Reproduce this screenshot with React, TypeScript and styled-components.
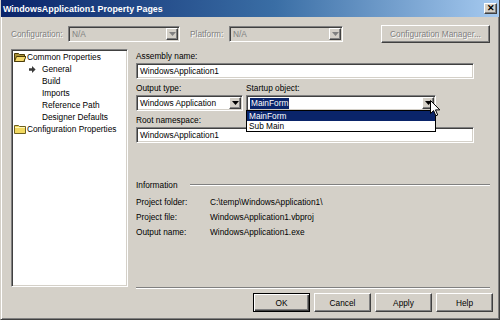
import { Fragment } from 'react';
import styled, { createGlobalStyle } from 'styled-components';

const GlobalStyle = createGlobalStyle`
  html, body { margin: 0; padding: 0; background: #d4d0c8; }
  body {
    font-family: Tahoma, "Liberation Sans", Arial, sans-serif;
    font-size: 8.3px;
    color: #000;
  }
  * { box-sizing: border-box; }
`;

// classic 3D borders
const raised = `
  border: 1px solid;
  border-color: #fff #404040 #404040 #fff;
  box-shadow: inset -1px -1px #808080, inset 1px 1px #d4d0c8;
  background: #d4d0c8;
`;

const sunken = `
  border: 1px solid;
  border-color: #808080 #fff #fff #808080;
  box-shadow: inset 1px 1px #404040, inset -1px -1px #d4d0c8;
`;

const DownArrow = ({ color = '#000' }: { color?: string }) => (
  <svg width="7" height="4" viewBox="0 0 7 4">
    <path d="M0 0h7L3.5 4z" fill={color} />
  </svg>
);

const OpenFolder = () => (
  <svg width="12" height="10" viewBox="0 0 12 10">
    <path d="M0.5 1.5h4l1 1h5v7h-10z" fill="#a89038" stroke="#4a3c08" />
    <path d="M0.5 9.5l2-5h9.5l-2.2 5z" fill="#f4d86a" stroke="#4a3c08" />
  </svg>
);

const ClosedFolder = () => (
  <svg width="12" height="10" viewBox="0 0 12 10">
    <path d="M0.5 1.5h4l1 1h6v7h-11z" fill="#f2d960" stroke="#6e6020" />
    <path d="M1 3.5h10" stroke="#fff7b8" />
  </svg>
);

const CurrentArrow = () => (
  <svg width="7" height="7" viewBox="0 0 7 7">
    <path d="M0 2.3h3V0l3.6 3.5L3 7V4.7H0z" fill="#3a3a3a" />
  </svg>
);

const PointerCursor = () => (
  <svg width="11" height="17" viewBox="0 0 11 17">
    <path
      d="M0.5 0.5V13.5L3.6 10.6 5.8 15.8 7.7 15 5.5 9.9H9.8Z"
      fill="#fff"
      stroke="#000"
      strokeLinejoin="round"
    />
  </svg>
);

const Window = styled.div`
  width: 500px;
  height: 320px;
  display: flex;
  flex-direction: column;
  background: #d4d0c8;
  border: 1px solid;
  border-top: none;
  border-color: #d4d0c8 #404040 #404040 #d4d0c8;
  box-shadow: inset 1px 0 #fff, inset -1px -1px #808080;
`;

const TitleBar = styled.div`
  height: 17px;
  display: flex;
  align-items: center;
  padding: 0 2px 0 2px;
  background: linear-gradient(to right, #0a246a, #3a6ea5 55%, #a6caf0);
`;

const Title = styled.div`
  flex: 1;
  color: #fff;
  font-weight: bold;
  font-size: 8.9px;
`;

const CloseButton = styled.div`
  ${raised}
  width: 13px;
  height: 11px;
  display: flex;
  align-items: center;
  justify-content: center;
  font: bold 9px "Liberation Sans", Arial, sans-serif;
  line-height: 1;
`;

const Body = styled.div`
  flex: 1;
  display: flex;
  flex-direction: column;
  padding: 8px 9px 0 10px;
`;

const TopRow = styled.div`
  height: 18px;
  display: flex;
  align-items: center;
`;

const RowLabel = styled.div<{ $width: number; $gap?: number }>`
  width: ${(p) => p.$width}px;
  margin-left: ${(p) => p.$gap ?? 0}px;
  color: #808080;
  text-shadow: 1px 1px 0 #fff;
  white-space: nowrap;
`;

const Combo = styled.div<{ $width: number; $disabled?: boolean }>`
  ${sunken}
  position: relative;
  width: ${(p) => p.$width}px;
  height: 16px;
  padding: 1px;
  display: flex;
  align-items: center;
  background: ${(p) => (p.$disabled ? '#d4d0c8' : '#fff')};
  color: ${(p) => (p.$disabled ? '#808080' : '#000')};
`;

const ComboText = styled.div`
  flex: 1;
  padding-left: 2px;
  line-height: 12px;
  white-space: nowrap;
`;

const ComboArrow = styled.div`
  ${raised}
  width: 12px;
  height: 12px;
  display: flex;
  align-items: center;
  justify-content: center;
`;

const ToolButton = styled.div`
  ${raised}
  margin-left: auto;
  width: 109px;
  height: 18px;
  display: flex;
  align-items: center;
  justify-content: center;
  color: #808080;
  text-shadow: 1px 1px 0 #fff;
`;

const Main = styled.div`
  margin-top: 6px;
  height: 240px;
  display: flex;
  gap: 8px;
`;

const TreePanel = styled.div`
  ${sunken}
  width: 117px;
  height: 238px;
  background: #fff;
  padding: 1px 0 0 2px;
`;

const TreeRow = styled.div<{ $level: number }>`
  height: 12px;
  display: flex;
  align-items: center;
  padding-left: ${(p) => p.$level * 15}px;
  white-space: nowrap;
`;

const TreeIcon = styled.span`
  width: 13px;
  display: flex;
  align-items: center;
`;

const RightColumn = styled.div`
  flex: 1;
  display: flex;
  flex-direction: column;
`;

const FieldLabel = styled.div<{ $top?: number }>`
  margin-top: ${(p) => p.$top ?? 0}px;
  height: 11px;
  line-height: 11px;
  margin-bottom: 1px;
  white-space: nowrap;
`;

const TextBox = styled.div`
  ${sunken}
  width: 338px;
  height: 16px;
  background: #fff;
  padding: 0 3px;
  line-height: 14px;
`;

const ComboGrid = styled.div`
  margin-top: 4px;
  display: grid;
  grid-template-columns: 107px 190px;
  column-gap: 3px;
  row-gap: 1px;
  & > ${FieldLabel} { margin: 0; }
`;

const Selected = styled.span`
  background: #0a246a;
  color: #fff;
  padding: 0 1px;
  line-height: 11px;
  display: inline-block;
`;

const DropList = styled.div`
  position: absolute;
  top: 100%;
  left: -1px;
  right: -1px;
  border: 1px solid #000;
  background: #fff;
  z-index: 2;
`;

const DropItem = styled.div<{ $selected?: boolean }>`
  height: 10px;
  line-height: 10px;
  padding-left: 2px;
  background: ${(p) => (p.$selected ? '#0a246a' : '#fff')};
  color: ${(p) => (p.$selected ? '#fff' : '#000')};
`;

const Pointer = styled.div`
  position: absolute;
  left: 183px;
  top: 4px;
  z-index: 3;
  line-height: 0;
`;

const InfoHeader = styled.div`
  margin-top: 36px;
  height: 11px;
  display: flex;
  align-items: center;
  gap: 12px;
`;

const EtchedLine = styled.div`
  flex: 1;
  height: 2px;
  border-top: 1px solid #808080;
  border-bottom: 1px solid #fff;
`;

const InfoGrid = styled.div`
  margin-top: 7px;
  display: grid;
  grid-template-columns: 74px 1fr;
  grid-auto-rows: 11px;
  row-gap: 4px;
  line-height: 11px;
  white-space: nowrap;
`;

const Separator = styled.div`
  margin-top: auto;
  height: 2px;
  border-top: 1px solid #808080;
  border-bottom: 1px solid #fff;
`;

const ButtonRow = styled.div`
  margin-top: 4px;
  margin-right: -3px;
  display: flex;
  justify-content: flex-end;
  gap: 4px;
`;

const DialogButton = styled.div<{ $default?: boolean }>`
  width: 57px;
  height: 19px;
  display: flex;
  align-items: center;
  justify-content: center;
  background: #d4d0c8;
  border: 1px solid;
  border-color: ${(p) => (p.$default ? '#000' : '#fff #404040 #404040 #fff')};
  box-shadow: ${(p) =>
    p.$default
      ? 'inset 1px 1px #fff, inset -1px -1px #404040, inset -2px -2px #808080'
      : 'inset -1px -1px #808080, inset 1px 1px #d4d0c8'};
`;

const treeItems = [
  { label: 'Common Properties', level: 0, icon: <OpenFolder /> },
  { label: 'General', level: 1, icon: <CurrentArrow /> },
  { label: 'Build', level: 1 },
  { label: 'Imports', level: 1 },
  { label: 'Reference Path', level: 1 },
  { label: 'Designer Defaults', level: 1 },
  { label: 'Configuration Properties', level: 0, icon: <ClosedFolder /> },
];

const info = [
  ['Project folder:', 'C:\\temp\\WindowsApplication1\\'],
  ['Project file:', 'WindowsApplication1.vbproj'],
  ['Output name:', 'WindowsApplication1.exe'],
];

export default function App() {
  return (
    <>
      <GlobalStyle />
      <Window>
        <TitleBar>
          <Title>WindowsApplication1 Property Pages</Title>
          <CloseButton>✕</CloseButton>
        </TitleBar>
        <Body>
          <TopRow>
            <RowLabel $width={57}>Configuration:</RowLabel>
            <Combo $width={112} $disabled>
              <ComboText>N/A</ComboText>
              <ComboArrow>
                <DownArrow color="#808080" />
              </ComboArrow>
            </Combo>
            <RowLabel $width={39} $gap={10}>Platform:</RowLabel>
            <Combo $width={114} $disabled>
              <ComboText>N/A</ComboText>
              <ComboArrow>
                <DownArrow color="#808080" />
              </ComboArrow>
            </Combo>
            <ToolButton>Configuration Manager...</ToolButton>
          </TopRow>

          <Main>
            <TreePanel>
              {treeItems.map((item) => (
                <TreeRow key={item.label} $level={item.level}>
                  <TreeIcon>{item.icon}</TreeIcon>
                  {item.label}
                </TreeRow>
              ))}
            </TreePanel>

            <RightColumn>
              <FieldLabel $top={2}>Assembly name:</FieldLabel>
              <TextBox>WindowsApplication1</TextBox>

              <ComboGrid>
                <FieldLabel>Output type:</FieldLabel>
                <FieldLabel>Startup object:</FieldLabel>
                <Combo $width={107}>
                  <ComboText>Windows Application</ComboText>
                  <ComboArrow>
                    <DownArrow />
                  </ComboArrow>
                </Combo>
                <Combo $width={190}>
                  <ComboText>
                    <Selected>MainForm</Selected>
                  </ComboText>
                  <ComboArrow>
                    <DownArrow />
                  </ComboArrow>
                  <DropList>
                    <DropItem $selected>MainForm</DropItem>
                    <DropItem>Sub Main</DropItem>
                  </DropList>
                  <Pointer>
                    <PointerCursor />
                  </Pointer>
                </Combo>
              </ComboGrid>

              <FieldLabel $top={4}>Root namespace:</FieldLabel>
              <TextBox>WindowsApplication1</TextBox>

              <InfoHeader>
                Information
                <EtchedLine />
              </InfoHeader>
              <InfoGrid>
                {info.map(([k, v]) => (
                  <Fragment key={k}>
                    <span>{k}</span>
                    <span>{v}</span>
                  </Fragment>
                ))}
              </InfoGrid>

              <Separator />
            </RightColumn>
          </Main>

          <ButtonRow>
            <DialogButton $default>OK</DialogButton>
            <DialogButton>Cancel</DialogButton>
            <DialogButton>Apply</DialogButton>
            <DialogButton>Help</DialogButton>
          </ButtonRow>
        </Body>
      </Window>
    </>
  );
}
